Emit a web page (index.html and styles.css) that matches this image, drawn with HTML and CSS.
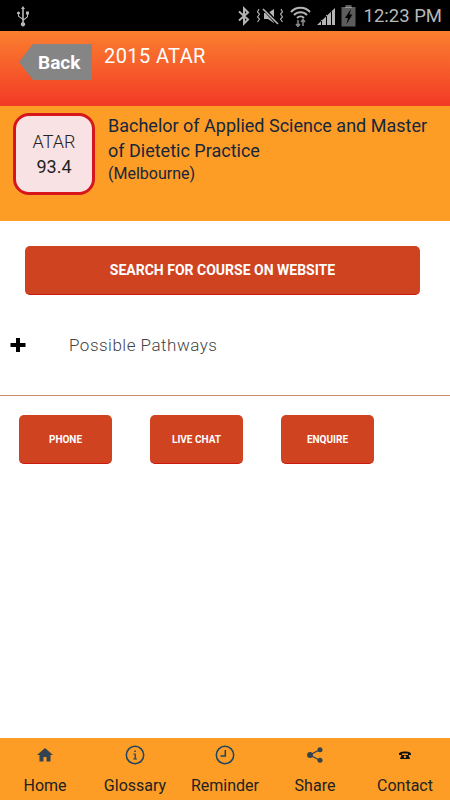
FILE: index.html
```html
<!DOCTYPE html>
<html lang="en">
  <head>
    <meta charset="UTF-8" />
    <meta name="viewport" content="width=device-width, initial-scale=1.0" />
    <title>2015 ATAR</title>
    <link rel="stylesheet" href="styles.css">
  </head>
  <body>
    <div class="app">
      <div class="statusbar">
        <svg class="usb" width="14" height="22" viewBox="0 0 14 22">
          <path d="M7 1 L9 4 H7.8 V14 L11 11.5 V9.5 H10 V6.5 H13 V9.5 H12 V12 L7.8 15.6 V17.2 A2.2 2.2 0 1 1 6.2 17.2 V14.6 L2 11.5 V9.3 A1.4 1.4 0 1 1 3 9.3 V11 L6.2 13.2 V4 H5 Z" fill="#b8b8b8" />
        </svg>
        <div class="status-right">
          <svg width="14" height="20" viewBox="0 0 14 20">
            <path d="M2 5.5 L11 13.5 L7 17.5 V2.5 L11 6.5 L2 14.5" fill="none" stroke="#b5b5b5" stroke-width="2" />
          </svg>
          <svg width="29" height="20" viewBox="0 0 29 20">
            <path d="M8 7 H12 L18 3 V17 L12 13 H8 Z" fill="#b5b5b5" />
            <path d="M7 2 L22 18" stroke="#000" stroke-width="3.5" />
            <path d="M7 3 L22 18" stroke="#b5b5b5" stroke-width="1.6" />
            <path d="M3 3 L1.5 6 L3.5 8 L1.5 11 L3.5 13 L1.5 16 M25 3 L26.5 6 L24.5 8 L26.5 11 L24.5 13 L26.5 16" fill="none" stroke="#b5b5b5" stroke-width="1.1" />
          </svg>
          <svg width="21" height="22" viewBox="0 0 21 22">
            <path d="M1 7 A13 13 0 0 1 20 7 M4 10 A9 9 0 0 1 17 10 M7 13 A5 5 0 0 1 14 13" fill="none" stroke="#b5b5b5" stroke-width="2" />
            <path d="M8 15 V21 M6 19 L8 21.5 L10 19 M13 21 V15 M11 17 L13 14.5 L15 17" fill="none" stroke="#8a8a8a" stroke-width="1.5" />
          </svg>
          <svg width="20" height="20" viewBox="0 0 20 20">
            <path d="M1 19 L19 2 V19 H16 V5 H15 V19 H11 V9 H10 V19 H6 V14 H5 V19 Z" fill="#b5b5b5" />
          </svg>
          <svg width="15" height="23" viewBox="0 0 15 23">
            <path d="M4.5 1 H10.5 V3 H14.5 V22.5 H0.5 V3 H4.5 Z" fill="#5c5c5c" />
            <path d="M4 3 H11 V3.8 H4 Z" fill="#a8a8a8" />
            <path d="M10 5 L4 14 H7 L5.5 20 L11.5 10.5 H8.5 Z" fill="#000" />
          </svg>
          <span class="clock">12:23 PM</span>
        </div>
      </div>

      <div class="header">
        <a class="back">Back</a>
        <h1>2015 ATAR</h1>
      </div>

      <div class="course">
        <div class="score">
          <span class="score-label">ATAR</span>
          <span class="score-value">93.4</span>
        </div>
        <div class="course-text">
          <p class="course-name">Bachelor of Applied Science and Master of Dietetic Practice</p>
          <p class="course-campus">(Melbourne)</p>
        </div>
      </div>

      <div class="main">
        <button class="btn search">SEARCH FOR COURSE ON WEBSITE</button>
        <div class="pathways">
          <svg class="plus" width="16" height="16" viewBox="0 0 16 16">
            <path d="M6 1 H10 V6 H15.5 V10 H10 V15 H6 V10 H0.5 V6 H6 Z" fill="#000" />
          </svg>
          <span>Possible Pathways</span>
        </div>
        <div class="actions">
          <button class="btn small">PHONE</button>
          <button class="btn small">LIVE CHAT</button>
          <button class="btn small">ENQUIRE</button>
        </div>
      </div>

      <div class="tabbar">
        <div class="tab">
          <svg width="18" height="18" viewBox="0 0 18 18">
            <path d="M9 2 L17 9 H14.5 V15.5 H10.5 V11 H7.5 V15.5 H3.5 V9 H1 Z" fill="#33434f" />
          </svg>
          <span>Home</span>
        </div>
        <div class="tab">
          <svg width="20" height="20" viewBox="0 0 20 20">
            <circle cx="10" cy="10" r="8.7" fill="none" stroke="#1d4560" stroke-width="1.5" />
            <path d="M8.5 8.6 H10.8 V13.6 H12 V14.6 H8.3 V13.6 H9.5 V9.6 H8.5 Z M9.3 5.5 H10.8 V7.1 H9.3 Z" fill="#1d4560" />
          </svg>
          <span>Glossary</span>
        </div>
        <div class="tab">
          <svg width="20" height="20" viewBox="0 0 20 20">
            <circle cx="10" cy="10" r="8.7" fill="none" stroke="#1d4560" stroke-width="1.5" />
            <path d="M10.3 5 V11 H5.5" fill="none" stroke="#1d4560" stroke-width="1.5" />
          </svg>
          <span>Reminder</span>
        </div>
        <div class="tab">
          <svg width="18" height="18" viewBox="0 0 18 18">
            <path d="M14 3.5 L4 9 L14 14.5" fill="none" stroke="#33434f" stroke-width="1.3" />
            <circle cx="14" cy="3.7" r="2.5" fill="#33434f" />
            <circle cx="4" cy="9" r="2.9" fill="#33434f" />
            <circle cx="14" cy="14.3" r="2.5" fill="#33434f" />
          </svg>
          <span>Share</span>
        </div>
        <div class="tab">
          <svg width="18" height="18" viewBox="0 0 18 18">
            <path d="M3 8 C2.5 4.500 15.500 4.500 15 8 V9 H12 V7.500 H6 V9 H3 Z M5.500 9 H12.500 L14 13 H4 Z" fill="#111" />
            <circle cx="9" cy="10.800" r="1.200" fill="#fd9d26" />
          </svg>
          <span>Contact</span>
        </div>
      </div>
    </div>
  </body>
</html>
```

FILE: styles.css
```css
html,
body {
  margin: 0;
  padding: 0;
}
body {
  font-family: Roboto, "Liberation Sans", sans-serif;
  background-color: white;
}
p,
h1 {
  margin: 0;
}
.app {
  display: flex;
  flex-direction: column;
  width: 450px;
  height: 800px;
  overflow: hidden;
}
.statusbar {
  display: flex;
  flex: 0 0 31px;
  align-items: center;
  justify-content: space-between;
  padding: 0 8px 0 16px;
  background-color: black;
}
.status-right {
  display: flex;
  align-items: center;
  gap: 5px;
}
.clock {
  margin-left: 3px;
  color: #b8b8b8;
  font-size: 18.5px;
}
.header {
  display: flex;
  flex: 0 0 75px;
  align-items: flex-start;
  box-sizing: border-box;
  padding: 13px 0 0 19px;
  background: linear-gradient(#fb7f2f, #f23a26);
}
.back {
  display: block;
  box-sizing: border-box;
  width: 73px;
  height: 36px;
  padding: 7px 0 0 19px;
  background-color: #858585;
  clip-path: polygon(0 50%, 14px 0, 100% 0, 100% 100%, 14px 100%);
  color: white;
  font-size: 19px;
  font-weight: 700;
}
.header h1 {
  margin-left: 12px;
  color: white;
  font-size: 20px;
  font-weight: 400;
  letter-spacing: 0.4px;
}
.course {
  display: flex;
  flex: 0 0 115px;
  box-sizing: border-box;
  padding: 7px 20px 0 13px;
  background-color: #fd9d26;
}
.score {
  display: flex;
  flex: 0 0 82px;
  flex-direction: column;
  align-items: center;
  justify-content: center;
  box-sizing: border-box;
  height: 82px;
  border: 3px solid #d7161b;
  border-radius: 16px;
  background-color: #f8e2e3;
  color: #222;
  font-size: 18px;
  font-weight: 300;
  line-height: 25px;
}
.score-value {
  font-weight: 400;
}
.course-text {
  margin-left: 13px;
  color: #16263c;
}
.course-name {
  font-size: 18px;
  line-height: 25px;
}
.course-campus {
  font-size: 16px;
  line-height: 22px;
}
.main {
  flex: 1;
  padding-top: 25px;
}
.btn {
  box-sizing: border-box;
  padding: 0;
  border: none;
  border-bottom: 1px solid #cc1a10;
  border-radius: 5px;
  background-color: #d04321;
  color: white;
  font-family: inherit;
  font-weight: 700;
}
.search {
  display: block;
  width: 395px;
  height: 49px;
  margin-left: 25px;
  font-size: 14px;
}
.pathways {
  display: flex;
  align-items: center;
  height: 100px;
  padding-left: 10px;
  border-bottom: 1px solid #c98a6a;
  color: #444;
  font-size: 17px;
  font-weight: 300;
  letter-spacing: 0.5px;
}
.pathways span {
  margin-left: 43px;
}
.actions {
  display: flex;
  gap: 38px;
  padding: 19px 0 0 19px;
}
.small {
  width: 93px;
  height: 49px;
  font-size: 10px;
}
.tabbar {
  display: flex;
  flex: 0 0 62px;
  padding: 0 0 0 0;
  background-color: #fd9d26;
}
.tab {
  display: flex;
  flex: 1;
  flex-direction: column;
  align-items: center;
  padding-top: 7px;
  color: #222;
  font-size: 16px;
  font-weight: 400;
}
.tab svg {
  height: 20px;
}
.tab span {
  margin-top: 11px;
}
```
